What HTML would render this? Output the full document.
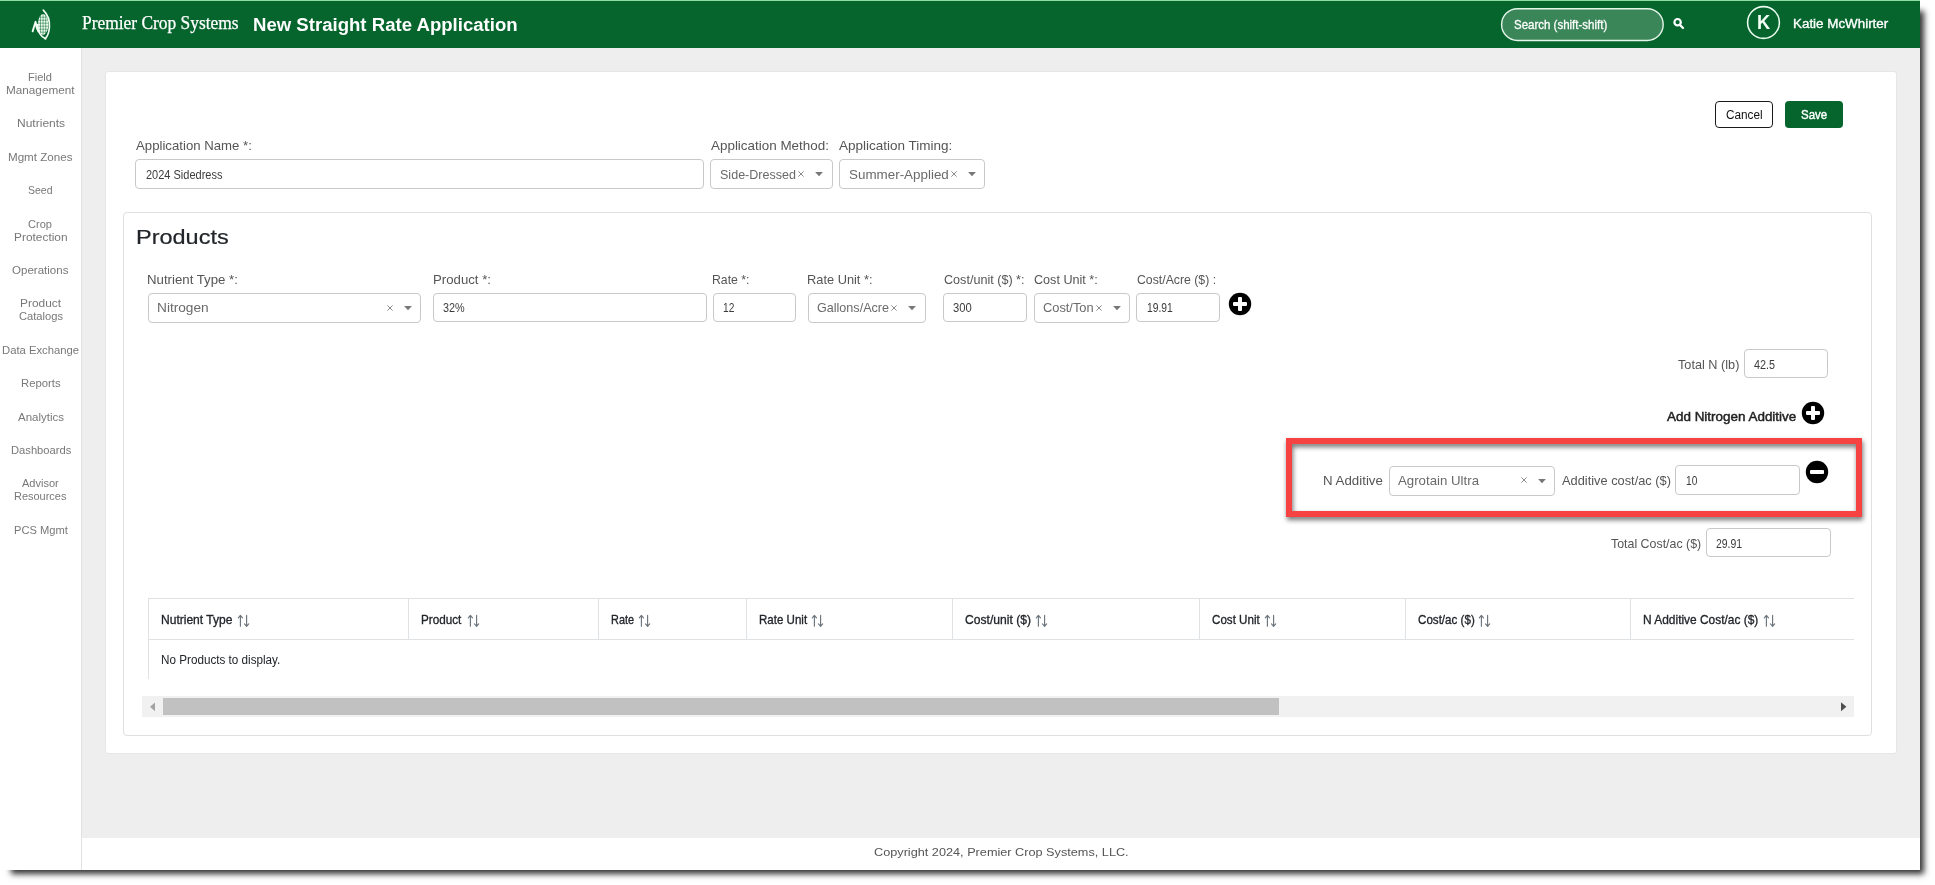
<!DOCTYPE html>
<html lang="en"><head><meta charset="utf-8"><title>New Straight Rate Application</title>
<style>
html,body{margin:0;padding:0;background:#fff;}
body{width:1935px;height:885px;overflow:hidden;position:relative;font-family:"Liberation Sans", sans-serif;}
#sh{position:absolute;left:7px;top:7px;width:1913px;height:863px;box-shadow:4px 4px 6px 0 rgba(0,0,0,.8);}
#win{position:absolute;left:0;top:0;width:1920px;height:870px;}
.b{position:absolute;display:block;}
.t{position:absolute;white-space:nowrap;display:block;line-height:1;transform-origin:0 0;}
.sn{font-family:"Liberation Sans",sans-serif;}
.sf{font-family:"Liberation Serif",serif;}
</style></head><body>
<div id="sh"></div>
<div id="win">
<div class="b" style="left:0px;top:0px;width:1920px;height:870px;background:#eeeeee"></div>
<div class="b" style="left:0px;top:0px;width:1920px;height:48px;background:#05652d"></div>
<div class="b" style="left:0px;top:0px;width:1920px;height:1px;background:#8fdca5"></div>
<div class="b" style="left:0px;top:48px;width:81px;height:822px;background:#fff"></div>
<div class="b" style="left:81px;top:48px;width:1px;height:822px;background:#e2e2e2"></div>
<div class="b" style="left:82px;top:838px;width:1838px;height:32px;background:#fff"></div>
<div class="b" style="left:105px;top:71px;width:1792px;height:683px;background:#fff;border:1px solid #e6e6e6;border-radius:3px;box-sizing:border-box"></div>
<div class="b" style="left:123px;top:212px;width:1749px;height:524px;background:#fff;border:1px solid #dfdfdf;border-radius:4px;box-sizing:border-box"></div>
<svg class="b" style="left:1499px;top:6px" width="168" height="38" viewBox="1499 6 168 38"><rect x="1501.6" y="8.7" width="161.6" height="31.8" rx="15.9" fill="#3b8659" stroke="#e6f5ea" stroke-width="1.4"/></svg>
<svg class="b" style="left:1744px;top:3px" width="40" height="40" viewBox="1744 3 40 40"><circle cx="1763.5" cy="22.5" r="15.9" fill="none" stroke="#e9fbee" stroke-width="1.6"/></svg>
<svg class="b" style="left:1672px;top:17px" width="14" height="13" viewBox="0 0 14 13"><circle cx="5.6" cy="5.2" r="3.2" fill="none" stroke="#fff" stroke-width="2.2"/><path d="M8 7.9 L11 11" stroke="#fff" stroke-width="2.2" stroke-linecap="round"/></svg>
<svg class="b" style="left:28px;top:6px" width="28" height="36" viewBox="28 6 28 36"><ellipse cx="43.1" cy="24.4" rx="5.2" ry="10.5" fill="#f1fff3"/><g stroke="#05652d" stroke-width="0.5"><path d="M40.5 14V35M43.1 13V36M45.7 14V35"/><path d="M38 17.2H49M38 20.2H49M38 23.2H49M38 26.2H49M38 29.2H49M38 32.2H49"/></g><path d="M43.3 10.2 C47.4 14.2 49.9 21 49.4 27.5 C49 32.8 47 36.8 45.2 38.8" fill="none" stroke="#f1fff3" stroke-width="1.7" stroke-linecap="round"/><path d="M37.5 24.5 C37.8 31.5 41 36.8 45.6 38.7" fill="none" stroke="#f1fff3" stroke-width="1.7" stroke-linecap="round"/><path d="M32.6 31.4 L35.6 21.8 C36 25 36.8 28.6 38.4 31.6" fill="none" stroke="#f1fff3" stroke-width="1.9" stroke-linecap="round" stroke-linejoin="round"/></svg>
<div class="b" style="left:1715px;top:101px;width:58px;height:27px;background:#fff;border:1px solid #1a1a1a;border-radius:4px;box-sizing:border-box"></div>
<div class="b" style="left:1785px;top:101px;width:58px;height:27px;background:#05652d;border-radius:4px"></div>
<div class="b" style="left:135px;top:159px;width:569px;height:30px;border:1px solid #c9c9c9;border-radius:4px;background:#fff;box-sizing:border-box"></div>
<div class="b" style="left:710px;top:159px;width:123px;height:30px;border:1px solid #c9c9c9;border-radius:4px;background:#fff;box-sizing:border-box"></div>
<div class="b" style="left:839px;top:159px;width:146px;height:30px;border:1px solid #c9c9c9;border-radius:4px;background:#fff;box-sizing:border-box"></div>
<div class="b" style="left:148px;top:293px;width:273px;height:30px;border:1px solid #c9c9c9;border-radius:4px;background:#fff;box-sizing:border-box"></div>
<div class="b" style="left:433px;top:293px;width:274px;height:29px;border:1px solid #c9c9c9;border-radius:4px;background:#fff;box-sizing:border-box"></div>
<div class="b" style="left:713px;top:293px;width:83px;height:29px;border:1px solid #c9c9c9;border-radius:4px;background:#fff;box-sizing:border-box"></div>
<div class="b" style="left:808px;top:293px;width:118px;height:30px;border:1px solid #c9c9c9;border-radius:4px;background:#fff;box-sizing:border-box"></div>
<div class="b" style="left:943px;top:293px;width:84px;height:29px;border:1px solid #c9c9c9;border-radius:4px;background:#fff;box-sizing:border-box"></div>
<div class="b" style="left:1034px;top:293px;width:96px;height:30px;border:1px solid #c9c9c9;border-radius:4px;background:#fff;box-sizing:border-box"></div>
<div class="b" style="left:1136px;top:293px;width:84px;height:29px;border:1px solid #c9c9c9;border-radius:4px;background:#fff;box-sizing:border-box"></div>
<div class="b" style="left:1744px;top:349px;width:84px;height:29px;border:1px solid #c9c9c9;border-radius:4px;background:#fff;box-sizing:border-box"></div>
<div class="b" style="left:1389px;top:466px;width:166px;height:30px;border:1px solid #c9c9c9;border-radius:4px;background:#fff;box-sizing:border-box"></div>
<div class="b" style="left:1675px;top:465px;width:125px;height:30px;border:1px solid #c9c9c9;border-radius:4px;background:#fff;box-sizing:border-box"></div>
<div class="b" style="left:1706px;top:528px;width:125px;height:29px;border:1px solid #c9c9c9;border-radius:4px;background:#fff;box-sizing:border-box"></div>
<svg class="b" style="left:797.3px;top:170.2px" width="8" height="8" viewBox="-4 -4 8 8"><path d="M-2.6 -2.6L2.6 2.6M2.6 -2.6L-2.6 2.6" stroke="#8a8a8a" stroke-width="1"/></svg>
<svg class="b" style="left:813.8px;top:170.6px" width="10" height="6" viewBox="-5 -3 10 6"><path d="M-3.9 -2L3.9 -2L0 2.2Z" fill="#777"/></svg>
<svg class="b" style="left:949.7px;top:170.2px" width="8" height="8" viewBox="-4 -4 8 8"><path d="M-2.6 -2.6L2.6 2.6M2.6 -2.6L-2.6 2.6" stroke="#8a8a8a" stroke-width="1"/></svg>
<svg class="b" style="left:966.8px;top:170.6px" width="10" height="6" viewBox="-5 -3 10 6"><path d="M-3.9 -2L3.9 -2L0 2.2Z" fill="#777"/></svg>
<svg class="b" style="left:385.6px;top:303.7px" width="8" height="8" viewBox="-4 -4 8 8"><path d="M-2.6 -2.6L2.6 2.6M2.6 -2.6L-2.6 2.6" stroke="#8a8a8a" stroke-width="1"/></svg>
<svg class="b" style="left:402.8px;top:305.0px" width="10" height="6" viewBox="-5 -3 10 6"><path d="M-3.9 -2L3.9 -2L0 2.2Z" fill="#777"/></svg>
<svg class="b" style="left:890.2px;top:303.7px" width="8" height="8" viewBox="-4 -4 8 8"><path d="M-2.6 -2.6L2.6 2.6M2.6 -2.6L-2.6 2.6" stroke="#8a8a8a" stroke-width="1"/></svg>
<svg class="b" style="left:907.0px;top:305.0px" width="10" height="6" viewBox="-5 -3 10 6"><path d="M-3.9 -2L3.9 -2L0 2.2Z" fill="#777"/></svg>
<svg class="b" style="left:1094.8px;top:303.7px" width="8" height="8" viewBox="-4 -4 8 8"><path d="M-2.6 -2.6L2.6 2.6M2.6 -2.6L-2.6 2.6" stroke="#8a8a8a" stroke-width="1"/></svg>
<svg class="b" style="left:1111.8px;top:305.0px" width="10" height="6" viewBox="-5 -3 10 6"><path d="M-3.9 -2L3.9 -2L0 2.2Z" fill="#777"/></svg>
<svg class="b" style="left:1519.7px;top:476.4px" width="8" height="8" viewBox="-4 -4 8 8"><path d="M-2.6 -2.6L2.6 2.6M2.6 -2.6L-2.6 2.6" stroke="#8a8a8a" stroke-width="1"/></svg>
<svg class="b" style="left:1537.0px;top:477.6px" width="10" height="6" viewBox="-5 -3 10 6"><path d="M-3.9 -2L3.9 -2L0 2.2Z" fill="#777"/></svg>
<svg class="b" style="left:1227.5px;top:292.4px" width="24" height="24" viewBox="-12 -12 24 24"><circle r="11.2" fill="#000"/><rect x="-7" y="-2" width="14" height="4" rx="1" fill="#fff"/><rect x="-2" y="-7" width="4" height="14" rx="1" fill="#fff"/></svg>
<svg class="b" style="left:1801.4px;top:401.4px" width="24" height="24" viewBox="-12 -12 24 24"><circle r="11.2" fill="#000"/><rect x="-7" y="-2" width="14" height="4" rx="1" fill="#fff"/><rect x="-2" y="-7" width="4" height="14" rx="1" fill="#fff"/></svg>
<svg class="b" style="left:1804.6px;top:460.4px" width="24" height="24" viewBox="-12 -12 24 24"><circle r="11.2" fill="#000"/><rect x="-7" y="-2" width="14" height="4" rx="1" fill="#fff"/></svg>
<div class="b" style="left:1286px;top:438px;width:576px;height:79px;border:6px solid #f74242;box-sizing:border-box;filter:drop-shadow(1px 3px 2.5px rgba(0,0,0,.55))"></div>
<div class="b" style="left:148px;top:598px;width:1706px;height:1px;background:#dfe2e5"></div>
<div class="b" style="left:148px;top:639px;width:1706px;height:1px;background:#dfe2e5"></div>
<div class="b" style="left:148px;top:598px;width:1px;height:81px;background:#dfe2e5"></div>
<div class="b" style="left:408px;top:598px;width:1px;height:42px;background:#dfe2e5"></div>
<div class="b" style="left:598px;top:598px;width:1px;height:42px;background:#dfe2e5"></div>
<div class="b" style="left:746px;top:598px;width:1px;height:42px;background:#dfe2e5"></div>
<div class="b" style="left:952px;top:598px;width:1px;height:42px;background:#dfe2e5"></div>
<div class="b" style="left:1199px;top:598px;width:1px;height:42px;background:#dfe2e5"></div>
<div class="b" style="left:1405px;top:598px;width:1px;height:42px;background:#dfe2e5"></div>
<div class="b" style="left:1630px;top:598px;width:1px;height:42px;background:#dfe2e5"></div>
<svg class="b" style="left:237.4px;top:613px" width="14" height="16" viewBox="-1 0 14 16"><g fill="none" stroke="#6c757d" stroke-width="1.15" stroke-linecap="round" stroke-linejoin="round"><path d="M2.4 13.2V2.6M0.3 4.8L2.4 2.4L4.5 4.8"/><path d="M8.6 2.4V13M6.5 10.9L8.6 13.3L10.7 10.9"/></g></svg>
<svg class="b" style="left:467.0px;top:613px" width="14" height="16" viewBox="-1 0 14 16"><g fill="none" stroke="#6c757d" stroke-width="1.15" stroke-linecap="round" stroke-linejoin="round"><path d="M2.4 13.2V2.6M0.3 4.8L2.4 2.4L4.5 4.8"/><path d="M8.6 2.4V13M6.5 10.9L8.6 13.3L10.7 10.9"/></g></svg>
<svg class="b" style="left:638.0px;top:613px" width="14" height="16" viewBox="-1 0 14 16"><g fill="none" stroke="#6c757d" stroke-width="1.15" stroke-linecap="round" stroke-linejoin="round"><path d="M2.4 13.2V2.6M0.3 4.8L2.4 2.4L4.5 4.8"/><path d="M8.6 2.4V13M6.5 10.9L8.6 13.3L10.7 10.9"/></g></svg>
<svg class="b" style="left:811.4px;top:613px" width="14" height="16" viewBox="-1 0 14 16"><g fill="none" stroke="#6c757d" stroke-width="1.15" stroke-linecap="round" stroke-linejoin="round"><path d="M2.4 13.2V2.6M0.3 4.8L2.4 2.4L4.5 4.8"/><path d="M8.6 2.4V13M6.5 10.9L8.6 13.3L10.7 10.9"/></g></svg>
<svg class="b" style="left:1035.4px;top:613px" width="14" height="16" viewBox="-1 0 14 16"><g fill="none" stroke="#6c757d" stroke-width="1.15" stroke-linecap="round" stroke-linejoin="round"><path d="M2.4 13.2V2.6M0.3 4.8L2.4 2.4L4.5 4.8"/><path d="M8.6 2.4V13M6.5 10.9L8.6 13.3L10.7 10.9"/></g></svg>
<svg class="b" style="left:1264.4px;top:613px" width="14" height="16" viewBox="-1 0 14 16"><g fill="none" stroke="#6c757d" stroke-width="1.15" stroke-linecap="round" stroke-linejoin="round"><path d="M2.4 13.2V2.6M0.3 4.8L2.4 2.4L4.5 4.8"/><path d="M8.6 2.4V13M6.5 10.9L8.6 13.3L10.7 10.9"/></g></svg>
<svg class="b" style="left:1478.4px;top:613px" width="14" height="16" viewBox="-1 0 14 16"><g fill="none" stroke="#6c757d" stroke-width="1.15" stroke-linecap="round" stroke-linejoin="round"><path d="M2.4 13.2V2.6M0.3 4.8L2.4 2.4L4.5 4.8"/><path d="M8.6 2.4V13M6.5 10.9L8.6 13.3L10.7 10.9"/></g></svg>
<svg class="b" style="left:1763.0px;top:613px" width="14" height="16" viewBox="-1 0 14 16"><g fill="none" stroke="#6c757d" stroke-width="1.15" stroke-linecap="round" stroke-linejoin="round"><path d="M2.4 13.2V2.6M0.3 4.8L2.4 2.4L4.5 4.8"/><path d="M8.6 2.4V13M6.5 10.9L8.6 13.3L10.7 10.9"/></g></svg>
<div class="b" style="left:142px;top:696px;width:1712px;height:21px;background:#f1f1f1"></div>
<div class="b" style="left:163px;top:698px;width:1116px;height:17px;background:#c1c1c1"></div>
<svg class="b" style="left:149px;top:701px" width="8" height="12" viewBox="0 0 8 12"><path d="M6 1.4L6 10.2L1 5.8Z" fill="#a3a3a3"/></svg>
<svg class="b" style="left:1839px;top:701px" width="10" height="12" viewBox="0 0 10 12"><path d="M2 1.2L2 10.2L7.4 5.7Z" fill="#505050"/></svg>
<span class="t sf" style="left:82.40px;top:14px;font-size:18px;font-weight:400;transform:scaleX(0.9667);color:#ffffff;-webkit-text-stroke:0.25px #ffffff">Premier Crop Systems</span>
<span class="t sn" style="left:253.44px;top:17px;font-size:17.5px;font-weight:700;transform:scaleX(1.0617);color:#ffffff">New Straight Rate Application</span>
<span class="t sn" style="left:1514.00px;top:19px;font-size:12.8px;font-weight:400;transform:scaleX(0.8980);color:#ffffff;-webkit-text-stroke:0.3px #ffffff">Search (shift-shift)</span>
<span class="t sn" style="left:1757.29px;top:12px;font-size:20px;font-weight:700;transform:scaleX(0.9143);color:#f4fff6">K</span>
<span class="t sn" style="left:1792.53px;top:18px;font-size:12.5px;font-weight:400;transform:scaleX(1.0713);color:#ffffff;-webkit-text-stroke:0.35px #ffffff">Katie McWhirter</span>
<span class="t sn" style="left:1726.40px;top:109px;font-size:12px;font-weight:400;transform:scaleX(0.9813);color:#111111">Cancel</span>
<span class="t sn" style="left:1801.00px;top:109px;font-size:12px;font-weight:400;transform:scaleX(0.9538);color:#ffffff;-webkit-text-stroke:0.4px #ffffff">Save</span>
<span class="t sn" style="left:135.60px;top:140px;font-size:12.6px;font-weight:400;transform:scaleX(1.0481);color:#555555">Application Name *:</span>
<span class="t sn" style="left:711.00px;top:140px;font-size:12.6px;font-weight:400;transform:scaleX(1.0662);color:#555555">Application Method:</span>
<span class="t sn" style="left:839.40px;top:140px;font-size:12.6px;font-weight:400;transform:scaleX(1.0718);color:#555555">Application Timing:</span>
<span class="t sn" style="left:135.88px;top:226px;font-size:21px;font-weight:400;transform:scaleX(1.1183);color:#212529;-webkit-text-stroke:0.2px #212529">Products</span>
<span class="t sn" style="left:147.35px;top:274px;font-size:12.6px;font-weight:400;transform:scaleX(1.0504);color:#555555">Nutrient Type *:</span>
<span class="t sn" style="left:432.55px;top:274px;font-size:12.6px;font-weight:400;transform:scaleX(1.0483);color:#555555">Product *:</span>
<span class="t sn" style="left:712.43px;top:274px;font-size:12.6px;font-weight:400;transform:scaleX(0.9729);color:#555555">Rate *:</span>
<span class="t sn" style="left:807.38px;top:274px;font-size:12.6px;font-weight:400;transform:scaleX(1.0175);color:#555555">Rate Unit *:</span>
<span class="t sn" style="left:943.60px;top:274px;font-size:12.6px;font-weight:400;transform:scaleX(1.0001);color:#555555">Cost/unit ($) *:</span>
<span class="t sn" style="left:1034.40px;top:274px;font-size:12.6px;font-weight:400;transform:scaleX(1.0002);color:#555555">Cost Unit *:</span>
<span class="t sn" style="left:1137.00px;top:274px;font-size:12.6px;font-weight:400;transform:scaleX(0.9742);color:#555555">Cost/Acre ($) :</span>
<span class="t sn" style="left:1678.40px;top:359px;font-size:12.6px;font-weight:400;transform:scaleX(1.0084);color:#555555">Total N (lb)</span>
<span class="t sn" style="left:1667.00px;top:411px;font-size:12.6px;font-weight:400;transform:scaleX(1.0673);color:#222222;-webkit-text-stroke:0.45px #222222">Add Nitrogen Additive</span>
<span class="t sn" style="left:1323.34px;top:475px;font-size:12.6px;font-weight:400;transform:scaleX(1.0569);color:#555555">N Additive</span>
<span class="t sn" style="left:1561.60px;top:475px;font-size:12.6px;font-weight:400;transform:scaleX(1.0178);color:#555555">Additive cost/ac ($)</span>
<span class="t sn" style="left:1610.60px;top:538px;font-size:12.6px;font-weight:400;transform:scaleX(0.9837);color:#555555">Total Cost/ac ($)</span>
<span class="t sn" style="left:145.60px;top:169px;font-size:12px;font-weight:400;transform:scaleX(0.9162);color:#3c3c3c">2024 Sidedress</span>
<span class="t sn" style="left:443.00px;top:302px;font-size:12px;font-weight:400;transform:scaleX(0.9036);color:#3c3c3c">32%</span>
<span class="t sn" style="left:723.40px;top:302px;font-size:12px;font-weight:400;transform:scaleX(0.8483);color:#3c3c3c">12</span>
<span class="t sn" style="left:953.40px;top:302px;font-size:12px;font-weight:400;transform:scaleX(0.9338);color:#3c3c3c">300</span>
<span class="t sn" style="left:1147.00px;top:302px;font-size:12px;font-weight:400;transform:scaleX(0.8565);color:#3c3c3c">19.91</span>
<span class="t sn" style="left:1754.00px;top:359px;font-size:12px;font-weight:400;transform:scaleX(0.9037);color:#3c3c3c">42.5</span>
<span class="t sn" style="left:1686.00px;top:475px;font-size:12px;font-weight:400;transform:scaleX(0.8483);color:#3c3c3c">10</span>
<span class="t sn" style="left:1715.60px;top:538px;font-size:12px;font-weight:400;transform:scaleX(0.8697);color:#3c3c3c">29.91</span>
<span class="t sn" style="left:720.00px;top:169px;font-size:12.6px;font-weight:400;transform:scaleX(0.9962);color:#6a6a6a">Side-Dressed</span>
<span class="t sn" style="left:848.60px;top:169px;font-size:12.6px;font-weight:400;transform:scaleX(1.0641);color:#6a6a6a">Summer-Applied</span>
<span class="t sn" style="left:156.91px;top:302px;font-size:12.6px;font-weight:400;transform:scaleX(1.0859);color:#6a6a6a">Nitrogen</span>
<span class="t sn" style="left:817.40px;top:302px;font-size:12.6px;font-weight:400;transform:scaleX(0.9987);color:#6a6a6a">Gallons/Acre</span>
<span class="t sn" style="left:1043.40px;top:302px;font-size:12.6px;font-weight:400;transform:scaleX(1.0182);color:#6a6a6a">Cost/Ton</span>
<span class="t sn" style="left:1398.40px;top:475px;font-size:12.6px;font-weight:400;transform:scaleX(1.0521);color:#6a6a6a">Agrotain Ultra</span>
<span class="t sn" style="left:161.00px;top:615px;font-size:11.9px;font-weight:400;transform:scaleX(1.0126);color:#212529;-webkit-text-stroke:0.3px #212529">Nutrient Type</span>
<span class="t sn" style="left:421.40px;top:615px;font-size:11.9px;font-weight:400;transform:scaleX(0.9838);color:#212529;-webkit-text-stroke:0.3px #212529">Product</span>
<span class="t sn" style="left:610.60px;top:615px;font-size:11.9px;font-weight:400;transform:scaleX(0.9175);color:#212529;-webkit-text-stroke:0.3px #212529">Rate</span>
<span class="t sn" style="left:758.60px;top:615px;font-size:11.9px;font-weight:400;transform:scaleX(0.9709);color:#212529;-webkit-text-stroke:0.3px #212529">Rate Unit</span>
<span class="t sn" style="left:965.00px;top:615px;font-size:11.9px;font-weight:400;transform:scaleX(1.0185);color:#212529;-webkit-text-stroke:0.3px #212529">Cost/unit ($)</span>
<span class="t sn" style="left:1211.60px;top:615px;font-size:11.9px;font-weight:400;transform:scaleX(0.9759);color:#212529;-webkit-text-stroke:0.3px #212529">Cost Unit</span>
<span class="t sn" style="left:1417.60px;top:615px;font-size:11.9px;font-weight:400;transform:scaleX(0.9762);color:#212529;-webkit-text-stroke:0.3px #212529">Cost/ac ($)</span>
<span class="t sn" style="left:1643.00px;top:615px;font-size:11.9px;font-weight:400;transform:scaleX(1.0027);color:#212529;-webkit-text-stroke:0.3px #212529">N Additive Cost/ac ($)</span>
<span class="t sn" style="left:161.00px;top:654px;font-size:12px;font-weight:400;transform:scaleX(0.9741);color:#212529">No Products to display.</span>
<span class="t sn" style="left:873.60px;top:846px;font-size:11.6px;font-weight:400;transform:scaleX(1.0947);color:#555555">Copyright 2024, Premier Crop Systems, LLC.</span>
<span class="t sn" style="left:28.45px;top:73px;font-size:10.2px;transform:scaleX(1.0841);color:#787878">Field</span>
<span class="t sn" style="left:6.25px;top:86px;font-size:10.2px;transform:scaleX(1.1520);color:#787878">Management</span>
<span class="t sn" style="left:16.60px;top:119px;font-size:10.2px;transform:scaleX(1.1802);color:#787878">Nutrients</span>
<span class="t sn" style="left:8.40px;top:153px;font-size:10.2px;transform:scaleX(1.1394);color:#787878">Mgmt Zones</span>
<span class="t sn" style="left:28.20px;top:186px;font-size:10.2px;transform:scaleX(1.0279);color:#787878">Seed</span>
<span class="t sn" style="left:28.45px;top:220px;font-size:10.2px;transform:scaleX(1.0841);color:#787878">Crop</span>
<span class="t sn" style="left:14.20px;top:233px;font-size:10.2px;transform:scaleX(1.1681);color:#787878">Protection</span>
<span class="t sn" style="left:12.45px;top:266px;font-size:10.2px;transform:scaleX(1.1319);color:#787878">Operations</span>
<span class="t sn" style="left:20.00px;top:299px;font-size:10.2px;transform:scaleX(1.1678);color:#787878">Product</span>
<span class="t sn" style="left:18.65px;top:312px;font-size:10.2px;transform:scaleX(1.0944);color:#787878">Catalogs</span>
<span class="t sn" style="left:1.85px;top:346px;font-size:10.2px;transform:scaleX(1.1072);color:#787878">Data Exchange</span>
<span class="t sn" style="left:20.85px;top:379px;font-size:10.2px;transform:scaleX(1.1103);color:#787878">Reports</span>
<span class="t sn" style="left:17.65px;top:413px;font-size:10.2px;transform:scaleX(1.1286);color:#787878">Analytics</span>
<span class="t sn" style="left:10.50px;top:446px;font-size:10.2px;transform:scaleX(1.0978);color:#787878">Dashboards</span>
<span class="t sn" style="left:21.90px;top:479px;font-size:10.2px;transform:scaleX(1.0816);color:#787878">Advisor</span>
<span class="t sn" style="left:14.45px;top:492px;font-size:10.2px;transform:scaleX(1.0761);color:#787878">Resources</span>
<span class="t sn" style="left:13.55px;top:526px;font-size:10.2px;transform:scaleX(1.0948);color:#787878">PCS Mgmt</span>
</div>
</body></html>
